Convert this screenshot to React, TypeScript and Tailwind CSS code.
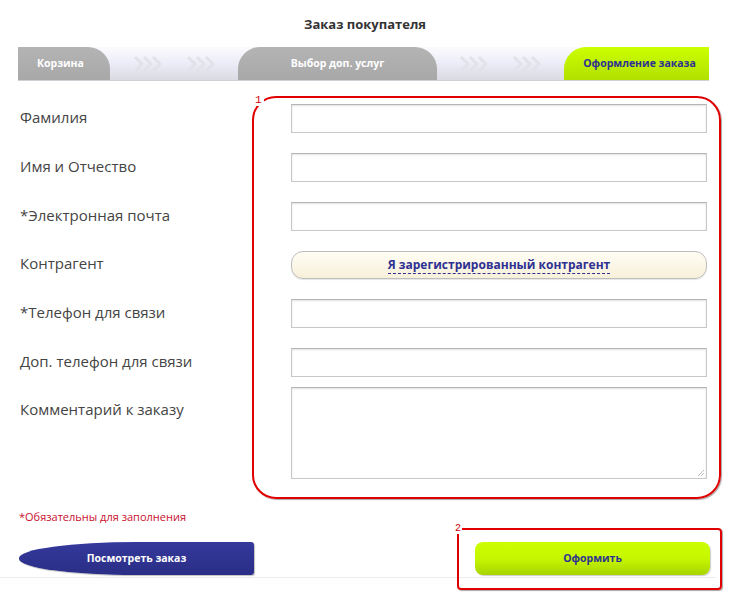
import { FC } from "react";

const Chevrons: FC = () => (
  <svg width="30" height="20" viewBox="0 0 30 20" fill="none">
    {[0, 9, 18].map((x) => (
      <path
        key={x}
        d={`M${x + 2} 3 L${x + 9} 10 L${x + 2} 17`}
        stroke="#e2e2ea"
        strokeWidth="3"
        strokeLinejoin="round"
      />
    ))}
  </svg>
);

const ChevronGap: FC<{ w: string }> = ({ w }) => (
  <div className={`${w} flex items-center justify-center gap-[23px] pt-[1px]`}>
    <Chevrons />
    <Chevrons />
  </div>
);

const inputCls =
  "w-[416px] h-[29px] border border-[#c8c8c8] border-t-[#b4b4b4] bg-white shadow-[inset_0_1px_2px_rgba(0,0,0,0.12)]";
const labelCls = "w-[291px] pl-[20px] text-[15px] text-[#444] leading-[20px]";

type Row = { label: string; top: string };
const rows: Row[] = [
  { label: "Фамилия", top: "mt-[23px]" },
  { label: "Имя и Отчество", top: "mt-[20px]" },
  { label: "*Электронная почта", top: "mt-[20px]" },
];
const rows2: Row[] = [
  { label: "*Телефон для связи", top: "mt-[20px]" },
  { label: "Доп. телефон для связи", top: "mt-[20px]" },
];

const FieldRow: FC<Row> = ({ label, top }) => (
  <div className={`${top} flex items-center`}>
    <div className={`${labelCls} mb-[4px]`}>{label}</div>
    <div className={inputCls} />
  </div>
);

export default function App() {
  return (
    <div
      className="relative w-[730px] h-[600px] bg-white overflow-hidden"
      style={{ fontFamily: '"Open Sans", "Liberation Sans", sans-serif' }}
    >
      <h1 className="pt-[15px] text-center text-[13px] font-bold text-[#333] leading-[18px]">
        Заказ покупателя
      </h1>

      <div className="mt-[14px] ml-[18px] w-[691px] h-[34px] flex bg-gradient-to-b from-[#fbfbfe] via-[#ececf8] to-[#dadae2] border-b border-[#d0d0d6]">
        <div className="w-[92px] rounded-tr-[22px] bg-gradient-to-b from-[#b4b4b4] to-[#a8a8a8] flex items-center pl-[19px] text-[10.5px] font-bold text-white">
          Корзина
        </div>
        <ChevronGap w="w-[128px]" />
        <div className="w-[199px] rounded-t-[22px] bg-gradient-to-b from-[#b4b4b4] to-[#a8a8a8] flex items-center justify-center text-[10.5px] font-bold text-white">
          Выбор доп. услуг
        </div>
        <ChevronGap w="w-[127px]" />
        <div className="flex-1 rounded-tl-[22px] bg-gradient-to-b from-[#ccff00] to-[#b2e000] flex items-center justify-center pl-[6px] text-[10.5px] font-bold text-[#2e3192]">
          Оформление заказа
        </div>
      </div>

      {rows.map((r) => (
        <FieldRow key={r.label} {...r} />
      ))}
      <div className="mt-[20px] flex items-center">
        <div className={`${labelCls} mb-[4px]`}>Контрагент</div>
        <div className="w-[416px] h-[28px] rounded-[12px] border border-[#bdbdbd] bg-gradient-to-b from-[#fffdf4] to-[#f7f0da] shadow-[0_1px_1px_rgba(0,0,0,0.1)] flex items-center justify-center">
          <span className="text-[12px] font-bold text-[#2e3192] leading-[16px] border-b border-dashed border-[#2e3192]">
            Я зарегистрированный контрагент
          </span>
        </div>
      </div>
      {rows2.map((r) => (
        <FieldRow key={r.label} {...r} />
      ))}
      <div className="mt-[10px] flex items-start">
        <div className={`${labelCls} pt-[12px]`}>Комментарий к заказу</div>
        <div className={`${inputCls} relative h-[92px]`}>
          <svg className="absolute right-[1px] bottom-[1px]" width="8" height="8" viewBox="0 0 8 8">
            <path d="M7 1 L1 7 M7 4 L4 7" stroke="#bbb" strokeWidth="1" />
          </svg>
        </div>
      </div>

      <div className="mt-[30px] pl-[19px] text-[11px] text-[#c8102e] leading-[16px]">
        *Обязательны для заполнения
      </div>

      <div className="mt-[17px] flex justify-between pl-[19px] pr-[20px]">
        <button className="w-[235px] h-[33px] rounded-l-[117px_16px] rounded-r-[3px] bg-gradient-to-b from-[#34399c] to-[#2a2e86] shadow-[1px_1px_1px_rgba(0,0,0,0.25)] text-white text-[10.5px] font-bold">
          Посмотреть заказ
        </button>
        <button className="w-[235px] h-[33px] rounded-[8px] bg-gradient-to-b from-[#ccff00] via-[#c6f700] to-[#a8d400] shadow-[1px_1px_1px_rgba(0,0,0,0.2)] text-[#2e3192] text-[10.5px] font-bold">
          Оформить
        </button>
      </div>
      <div className="mt-[2px] w-[716px] h-px bg-[#ececec]" />

      {/* annotation overlays */}
      <div className="absolute left-[252px] top-[96px] w-[469px] h-[403px] rounded-[24px] border-2 border-[#e00000] shadow-[1px_1px_1px_rgba(0,0,0,0.35)] pointer-events-none" />
      <div
        className="absolute left-[255px] top-[94px] text-[11px] leading-[12px] text-[#d00000] bg-white pr-[2px]"
        style={{ fontFamily: '"Liberation Mono", monospace' }}
      >
        1
      </div>
      <div className="absolute left-[457px] top-[528px] w-[265px] h-[62px] rounded-[4px] border-2 border-[#e00000] shadow-[1px_1px_1px_rgba(0,0,0,0.35)] pointer-events-none" />
      <div
        className="absolute left-[455px] top-[523px] text-[10px] leading-[11px] text-[#d00000] bg-white pr-[1px]"
        style={{ fontFamily: '"Liberation Mono", monospace' }}
      >
        2
      </div>
    </div>
  );
}
